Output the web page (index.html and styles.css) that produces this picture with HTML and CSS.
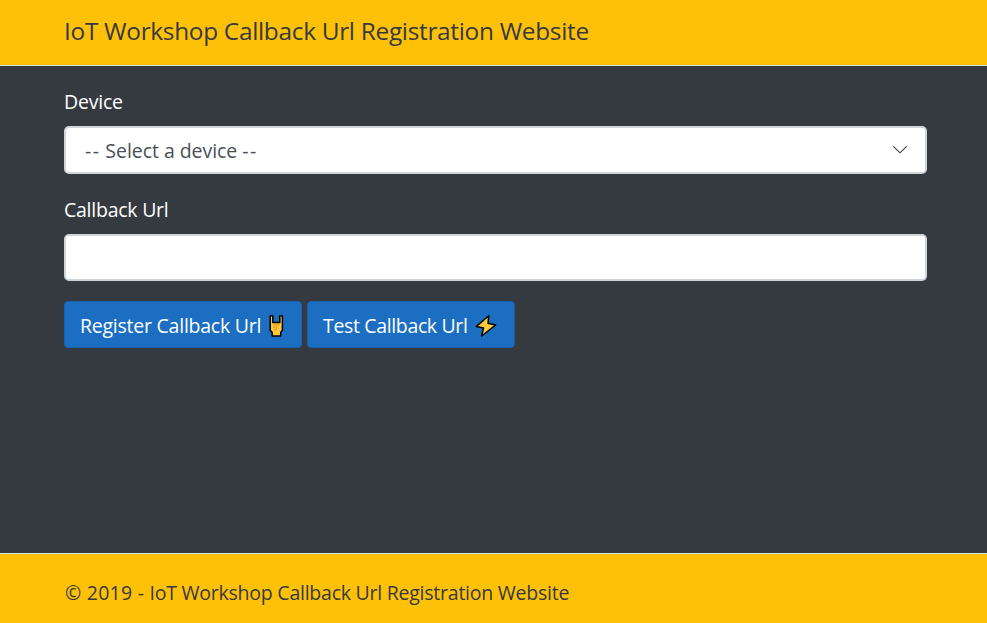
FILE: index.html
```html
<!DOCTYPE html>
<html lang="en">
<head>
<meta charset="utf-8">
<title>IoT Workshop Callback Url Registration Website</title>
<link rel="stylesheet" href="styles.css">
</head>
<body>
<header class="header"><a class="brand">IoT Workshop Callback Url Registration Website</a></header>
<main class="main">
  <div class="group">
    <label class="label label-device">Device</label>
    <div class="control select">
      <span class="value"><span class="dashes">--</span> Select a device <span class="dashes">--</span></span>
      <svg class="chevron" width="16" height="10" viewBox="0 0 16 10"><path d="M1.3 1.3 8 7.8l6.7-6.5" fill="none" stroke="#343a40" stroke-width="1.1"/></svg>
    </div>
  </div>
  <div class="group">
    <label class="label label-url" for="url">Callback Url</label>
    <input class="control input" id="url" type="text">
  </div>
  <div class="actions">
    <button class="btn btn-register"><span class="btn-text register-text">Register Callback Url</span>
      <svg class="horns" width="15" height="24" viewBox="0 0 15 24"><path d="M1.2 1.8h2.6v6.6h7V1.8h2.6v14.4l-1.7 2.2v3.7H3.2v-3.7l-2-2.2z" fill="#ffc83d" stroke="#000" stroke-width="1.5" stroke-linejoin="round"/><path d="M4 11h6.7M7.3 8.8V11M4 13.2h3.4v2.3H5.8V17" fill="none" stroke="#e08a10" stroke-width=".8"/></svg>
    </button>
    <button class="btn btn-test"><span class="btn-text test-text">Test Callback Url</span>
      <svg class="bolt" width="22" height="24" viewBox="0 0 22 24"><path d="M13.8 1.8 1.4 12.4l7.2 1.5-2 8.1L20.6 11l-7.6-1.7z" fill="#ffc83d" stroke="#000" stroke-width="1.5" stroke-linejoin="round"/></svg>
    </button>
  </div>
</main>
<footer class="footer"><span class="year">© 2019 - </span><span class="copyright">IoT Workshop Callback Url Registration Website</span></footer>
</body>
</html>
```
FILE: styles.css
```css
* { box-sizing: border-box; }
body {
  margin: 0;
  height: 623px;
  display: flex;
  flex-direction: column;
  background: #353a41;
  color: #fff;
  font: 19.5px/30px "Open Sans", sans-serif;
}
.header {
  height: 66px;
  padding: 12px 64px 0;
  background: #ffc107;
  border-bottom: 1px solid #dee2e6;
  color: #343a40;
}
.brand { font-size: 24.4px; line-height: 38px; letter-spacing: -0.3px; white-space: nowrap; }
.main { flex: 1; padding: 21px 60px 0 64px; }
.group { margin-bottom: 21px; }
.label { display: block; height: 30px; margin-bottom: 9px; }
.label-device { letter-spacing: -0.2px; }
.label-url { letter-spacing: -0.25px; }
.control {
  display: flex;
  width: 863px;
  height: 48px;
  border: 2px solid #ced4da;
  border-radius: 5px;
  background: #fff;
  color: #495057;
}
.select { align-items: center; justify-content: space-between; padding: 0 17px 0 19px; }
.value { letter-spacing: -0.05px; padding-top: 2px; }
.dashes { letter-spacing: 1.4px; }
.input { height: 47px; padding: 0 15px; font: inherit; }
.actions { display: flex; gap: 5px; margin-top: -1px; }
.btn {
  display: flex;
  align-items: center;
  height: 47px;
  padding: 2px 15px 0;
  border: 1px solid #1861ac;
  border-radius: 4px;
  background: #1b6ec2;
  color: #fff;
  font: inherit;
  white-space: nowrap;
}
.btn-register { width: 238px; justify-content: space-between; padding-right: 17px; }
.btn-test { width: 208px; justify-content: space-between; padding-right: 17px; }
.register-text { letter-spacing: -0.24px; }
.test-text { letter-spacing: -0.35px; }
.footer {
  height: 70px;
  padding: 24px 64px 0 65px;
  background: #ffc107;
  border-top: 1px solid #dee2e6;
  color: #343a40;
  white-space: nowrap;
}
.year { letter-spacing: 0.25px; }
.copyright { letter-spacing: -0.24px; }
```
